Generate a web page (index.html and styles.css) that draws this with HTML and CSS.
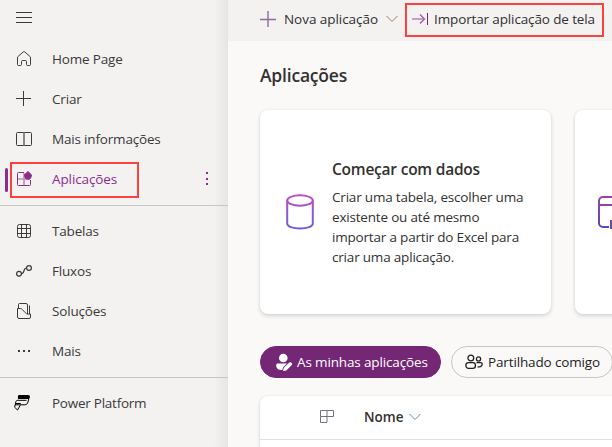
FILE: index.html
```html
<!DOCTYPE html>
<html lang="pt">
<head>
<meta charset="utf-8">
<title>Power Apps</title>
<link rel="stylesheet" href="styles.css">
</head>
<body>
<div class="app">
  <nav class="sidebar">
    <div class="menu-toggle">
      <svg width="16" height="12" viewBox="0 0 16 12"><path d="M0 .5h16M0 5.5h16M0 10.5h16" stroke="#3b3a39"/></svg>
    </div>
    <a class="item"><svg class="icon" viewBox="0 0 16 16"><path d="M1.500 6 7.200.9a1.200 1.200 0 0 1 1.600 0l5.700 5.100v7.500a1 1 0 0 1-1 1h-2a1 1 0 0 1-1-1v-3a1 1 0 0 0-1-1h-3a1 1 0 0 0-1 1v3a1 1 0 0 1-1 1h-2a1 1 0 0 1-1-1z"/></svg><span>Home Page</span></a>
    <a class="item"><svg class="icon" viewBox="0 0 16 16"><path d="M7.500 0v15M0 7.500h15"/></svg><span>Criar</span></a>
    <a class="item"><svg class="icon" viewBox="0 0 16 16"><rect x=".5" y="1.500" width="15" height="13" rx="1"/><path d="M8 1.500v13" stroke="#8a8886" stroke-width="2"/></svg><span>Mais informações</span></a>
    <a class="item active"><svg class="icon" viewBox="0 0 16 16"><path d="M8 1.500H2.500a1 1 0 0 0-1 1v11a1 1 0 0 0 1 1h11a1 1 0 0 0 1-1V9"/><path d="M8 2v12M2 8h12" opacity=".5" stroke-width="1.700"/><path class="solid" d="M12 .5 15.600 4 14.500 7.500 12 8.300 9.500 7.500 8.300 4z"/></svg><span>Aplicações</span>
      <svg class="more" width="4" height="16" viewBox="0 0 4 16"><path d="M1 1h2v2H1zM1 7h2v2H1zM1 12h2v2H1z" fill="#8c2d8c"/></svg>
      <i class="highlight nav-highlight"></i></a>
    <hr>
    <a class="item"><svg class="icon" viewBox="0 0 16 16"><rect x="1.500" y="1.500" width="13" height="13" rx="2"/><path d="M5.500 1.500v13M10.500 1.500v13M1.500 5.500h13M1.500 10.500h13"/></svg><span>Tabelas</span></a>
    <a class="item"><svg class="icon" viewBox="0 0 16 16"><g stroke-width="1.200"><circle cx="3" cy="10.700" r="2.400"/><circle cx="13" cy="5" r="2.400"/><path d="M5.400 10.700c3.700 0 1.400-5.700 5.200-5.700"/></g></svg><span>Fluxos</span></a>
    <a class="item"><svg class="icon" viewBox="0 0 16 16"><path d="M2.500 5V1.500a1 1 0 0 1 1-1H10a1.500 1.500 0 0 1 1.500 1.500v9M1.500 14V5.500h2.800c1 0 1.500.4 2.100 1.100L9.300 9.700c.8.900 1.400 1.400 2.700 1.400h2.500V14a1.500 1.500 0 0 1-1.500 1.500H3A1.500 1.500 0 0 1 1.500 14zM13.500 2.500v8.500"/></svg><span>Soluções</span></a>
    <a class="item"><svg class="icon" viewBox="0 0 16 16"><path class="solid" d="M2 7h2v2H2zM7 7h2v2H7zM12 7h2v2h-2z" stroke="none"/></svg><span>Mais</span></a>
    <hr>
    <a class="item platform"><svg class="icon" viewBox="0 0 16 16"><path d="M5 0h9c1.500 0 2.200.8 1.900 2.200l-.6 1.500c-.4.500-1 .4-1.800.4H4L3.900 1.800C4 .8 4.300.2 5 0z" fill="#000" stroke="none"/><path d="M14.700 4 14 7c-.5 1.800-1.500 2.800-3.200 2.800H6.500L3.500 15 .6 12.200l1.300-5.500C2.200 5.600 2.700 5.300 3.800 5.300h8.700M2 8.500h4.500c0 1-.3 1.300-1 1.300H1.200" stroke="#000"/></svg><span>Power Platform</span></a>
  </nav>
  <main class="content">
    <header class="toolbar">
      <svg class="plus" width="16" height="16" viewBox="0 0 16 16"><path d="M8 0v16M0 8.500h16" stroke="#8f6b9d" stroke-width="1.400"/></svg>
      <span class="new-app">Nova aplicação</span>
      <svg class="chev" width="12" height="8" viewBox="0 0 12 8"><path d="m.5 1 5.500 5.500L11.500 1" stroke="#99806f" fill="none"/></svg>
      <div class="import"><svg width="17" height="12" viewBox="0 0 17 12"><path d="M0 6h12" stroke="#b283b8" stroke-width="1.500"/><path d="m8 1.500 4.500 4.500L8 10.500" fill="none" stroke="#9b559e" stroke-width="1.200"/><path d="M15.500 0v12" stroke="#742774"/></svg><span>Importar aplicação de tela</span><i class="highlight import-highlight"></i></div>
    </header>
    <h1>Aplicações</h1>
    <section class="cards">
      <article class="card">
        <svg class="data-icon" width="28" height="36" viewBox="0 0 28 36"><defs><linearGradient id="g1" gradientUnits="userSpaceOnUse" x1="0" y1="0" x2="0" y2="36"><stop stop-color="#c44bc4"/><stop offset="1" stop-color="#6860df"/></linearGradient></defs><g fill="none" stroke="url(#g1)" stroke-width="2"><ellipse cx="14" cy="6.500" rx="12.800" ry="5.200"/><path d="M1.200 6.500v23c0 3 5.500 5 12.800 5s12.800-2 12.800-5v-23"/></g></svg>
        <div class="card-text">
          <h2>Começar com dados</h2>
          <p>Criar uma tabela, escolher uma<br>existente ou até mesmo<br>importar a partir do Excel para<br>criar uma aplicação.</p>
        </div>
      </article>
      <article class="card">
        <svg class="page-icon" width="36" height="36" viewBox="0 0 36 36"><defs><linearGradient id="g2" gradientUnits="userSpaceOnUse" x1="0" y1="0" x2="0" y2="34"><stop stop-color="#a23f9d"/><stop offset="1" stop-color="#594ab8"/></linearGradient></defs><g fill="none" stroke="url(#g2)" stroke-width="2"><path d="M12 33H6a4 4 0 0 1-4-4V7a4 4 0 0 1 4-4h24v20M2 11h28M14 35v-8h16"/></g></svg>
      </article>
    </section>
    <div class="filters">
      <button class="pill selected"><svg width="17" height="18" viewBox="0 0 17 18"><g fill="#fff"><circle cx="7.300" cy="5" r="4.300"/><path d="M1.500 10.500H11L7 14.500 6.300 17C2.500 17 .2 15.600.2 12.500c0-1.200.4-2 1.300-2z"/><path d="m7.700 15 5.300-5.300c1.700-1.700 4.300.8 2.600 2.500L10.300 17.500l-3.300.5z"/></g></svg><span>As minhas aplicações</span></button>
      <button class="pill outline"><svg width="18" height="16" viewBox="0 0 18 16"><g fill="none" stroke="#201f1e" stroke-width="1.300"><circle cx="5.800" cy="4" r="2.900"/><circle cx="13.500" cy="5" r="2.100"/><rect x=".9" y="8.700" width="9.500" height="5.600" rx="2.600"/><path d="M11.500 8.700h4.200c1 0 1.500.5 1.500 1.400 0 2-1.800 3-4.700 2.800"/></g></svg><span>Partilhado comigo</span></button>
    </div>
    <section class="table">
      <div class="table-head">
        <svg class="type-icon" width="14" height="13" viewBox="0 0 14 13"><path d="M.5.500h13v6H.5zM.5 6.500v6H7V.500" fill="none" stroke="#77717e"/></svg>
        <span class="col-name">Nome</span>
        <svg width="12" height="8" viewBox="0 0 12 8"><path d="m.5 1 5.500 5.500L11.500 1" stroke="#5b8fa5" fill="none"/></svg>
      </div>
    </section>
  </main>
</div>
</body>
</html>
```
FILE: styles.css
```css
* { box-sizing: border-box; }
body {
  margin: 0;
  overflow: hidden;
  font: 13.5px/20px "Open Sans", "Noto Sans", sans-serif;
  color: #323130;
}
.app { display: flex; width: 612px; height: 447px; overflow: hidden; background: #faf9f8; }
.sidebar {
  flex: 0 0 228px;
  background: linear-gradient(to right, #f3f2f1 214px, #e5e5e4 228px);
}
.menu-toggle { height: 39px; padding: 12px 16px 0; }
.menu-toggle svg, .toolbar svg, .card svg, .pill svg, .table svg { display: block; flex: none; }
.item {
  position: relative;
  display: flex;
  align-items: center;
  height: 40px;
  padding-left: 16px;
  color: #3b3a39;
  letter-spacing: -0.18px;
}
.icon { width: 16px; height: 16px; margin-right: 20px; fill: none; stroke: #3b3a39; overflow: visible; }
.icon .solid { fill: #3b3a39; }
.active { color: #8c2d8c; letter-spacing: -0.1px; }
.active::before { content: ""; position: absolute; left: 5px; top: 9px; width: 3px; height: 24px; border-radius: 2px; background: #8c2d8c; }
.active .icon { stroke: #8c2d8c; }
.active .icon .solid { fill: #8c2d8c; }
.more { margin-left: auto; margin-right: 19px; }
.platform { letter-spacing: -0.25px; }
.platform .icon { margin-left: -2px; margin-right: 22px; }
hr { height: 1px; margin: 6px 0 5px; border: 0; background: #c8c6c4; }
.highlight { position: absolute; border: 2px solid #fc4141; }
.nav-highlight { left: 10px; top: 3px; width: 129px; height: 36px; }
.content { flex: 1; min-width: 0; overflow: hidden; }
.toolbar {
  display: flex;
  align-items: center;
  height: 41px;
  padding: 0 0 3px 32px;
  background: #f3f2f1;
  white-space: nowrap;
  letter-spacing: -0.13px;
}
.new-app { width: 94px; margin: 0 8px; letter-spacing: -0.05px; }
.import { position: relative; display: flex; align-items: center; margin-left: 14px; }
.import span { margin-left: 5px; }
.import-highlight { left: -7px; top: -6px; width: 199px; height: 34px; }
h1 { margin: 22px 0 23px 32px; font-size: 17.5px; line-height: 24px; font-weight: 600; letter-spacing: -0.2px; }
.cards { display: flex; gap: 24px; width: 640px; padding-left: 32px; }
.card {
  display: flex;
  align-items: center;
  width: 291px;
  height: 204px;
  padding-left: 26px;
  border-radius: 8px;
  background: #fff;
  box-shadow: 0 2px 4px rgba(0, 0, 0, .14), 0 0 2px rgba(0, 0, 0, .08);
}
.card-text { margin-left: 18px; white-space: nowrap; }
h2 { margin: 0 0 7px; font-size: 15.5px; line-height: 22px; font-weight: 600; letter-spacing: -0.22px; }
p { margin: 0; letter-spacing: -0.19px; }
.page-icon { margin-left: -4px; }
.filters { display: flex; gap: 10px; width: 400px; margin: 32px 0 18px 32px; }
.pill {
  display: flex;
  align-items: center;
  height: 32px;
  padding: 0 0 0 15px;
  border: 1px solid #742774;
  border-radius: 16px;
  font: inherit;
  letter-spacing: -0.14px;
  white-space: nowrap;
}
.selected { width: 181px; background: #742774; color: #fff; }
.selected span { margin-left: 4px; }
.outline { width: 162px; padding-left: 13px; border-color: #c8c6c4; background: transparent; color: #201f1e; }
.outline span { margin-left: 5px; }
.table { width: 400px; height: 80px; margin-left: 32px; border-radius: 8px; background: #fff; box-shadow: 0 2px 4px rgba(0, 0, 0, .14), 0 0 2px rgba(0, 0, 0, .08); }
.table-head { display: flex; align-items: center; height: 44px; padding-left: 60px; border-bottom: 1px solid #e1dfdd; }
.col-name { position: relative; top: -1px; margin: 0 6px 0 30px; font-weight: 600; }
.type-icon, .col-name + svg { margin-bottom: 2px; }
```
